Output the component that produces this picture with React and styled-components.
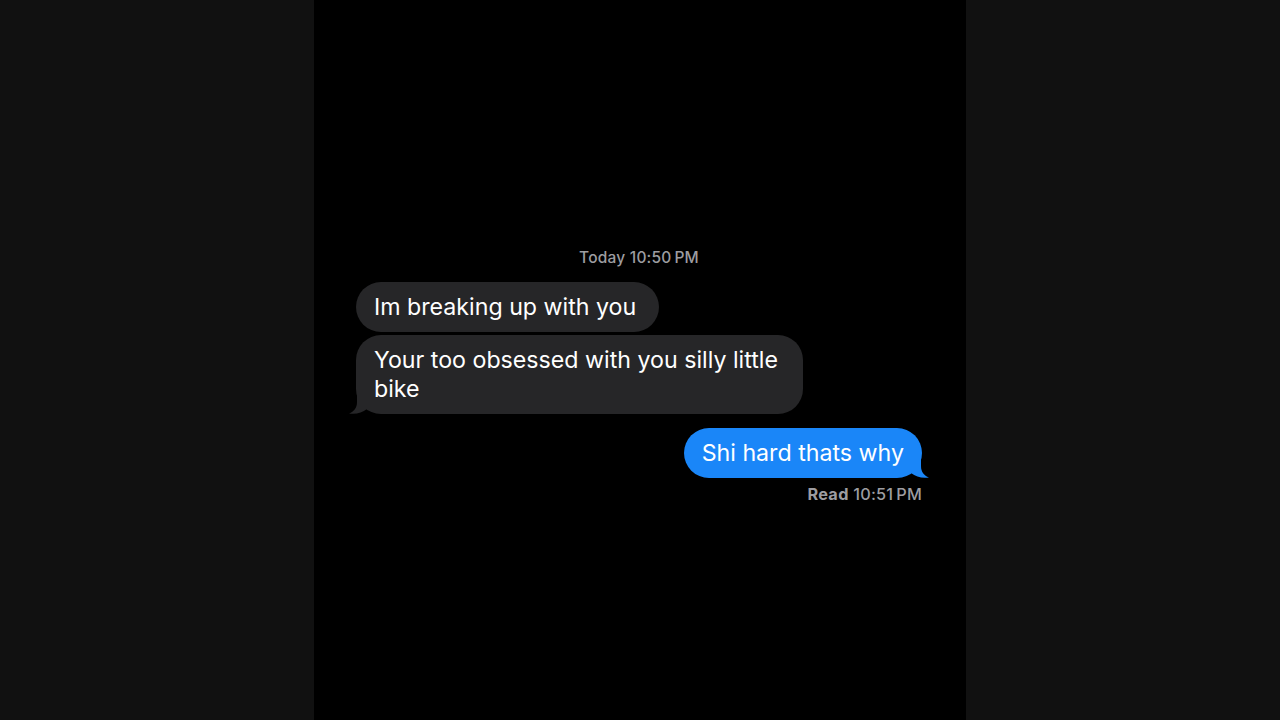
import React from "react";
import styled, { createGlobalStyle } from "styled-components";

const Global = createGlobalStyle`
  html, body {
    margin: 0;
    padding: 0;
    background: #111111;
    font-family: "Inter", "Noto Sans", sans-serif;
  }
`;

const Page = styled.div`
  display: flex;
  justify-content: center;
  height: 720px;
  background: #111111;
`;

const Column = styled.div`
  width: 652px;
  background: #000;
  display: flex;
  flex-direction: column;
  padding: 248px 44px 0 42px;
  box-sizing: border-box;
`;

const Stamp = styled.div`
  align-self: ${(p) => (p.$right ? "flex-end" : "center")};
  color: #9d9da1;
  font-size: ${(p) => (p.$right ? 16.3 : 15.5)}px;
  font-weight: 500;
  letter-spacing: 0.2px;
  line-height: 20px;
  margin: ${(p) => p.$margin || "0"};
  b {
    font-weight: 700;
    letter-spacing: 0.3px;
  }
`;

const Bubble = styled.div`
  position: relative;
  align-self: ${(p) => (p.$me ? "flex-end" : "flex-start")};
  max-width: 447px;
  box-sizing: border-box;
  padding: 11px ${(p) => (p.$me ? 18 : 23)}px 10px 18px;
  border-radius: 25px;
  background: ${(p) => (p.$me ? "#1a86f8" : "#262628")};
  color: #fff;
  font-size: 23.2px;
  line-height: 29px;
  margin-top: ${(p) => p.$gap || 0}px;
`;

const Tail = styled.svg`
  position: absolute;
  bottom: 0;
  width: 18px;
  height: 22px;
  ${(p) => (p.$me ? "right: -7px;" : "left: -7px; transform: scaleX(-1);")}
`;

function BubbleTail({ me }) {
  return (
    <Tail $me={me} viewBox="0 0 18 22">
      <path
        d="M0 0 L10 0 L10 10 C10 16 13 19.5 18 21.5 C11 22.5 5 21 0 17 Z"
        fill={me ? "#1a86f8" : "#262628"}
      />
    </Tail>
  );
}

export default function App() {
  return (
    <>
      <Global />
      <Page>
        <Column>
          <Stamp $margin="0 0 14px">Today 10:50&#8201;PM</Stamp>
          <Bubble>Im breaking up with you</Bubble>
          <Bubble $gap={3}>
            Your too obsessed with you silly little bike
            <BubbleTail />
          </Bubble>
          <Bubble $me $gap={14}>
            Shi hard thats why
            <BubbleTail me />
          </Bubble>
          <Stamp $right $margin="6px 0 0">
            <b>Read</b> 10:51&#8201;PM
          </Stamp>
        </Column>
      </Page>
    </>
  );
}
